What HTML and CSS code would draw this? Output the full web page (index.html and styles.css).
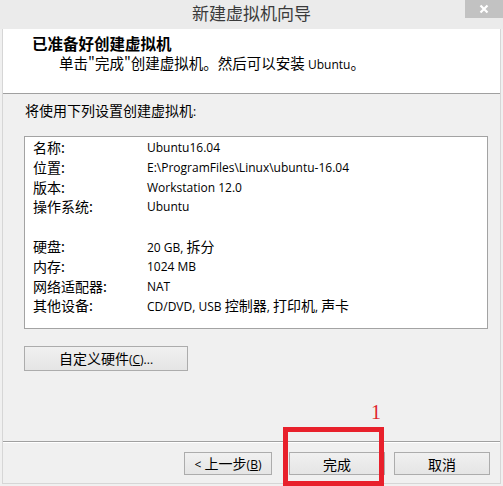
FILE: index.html
```html
<!DOCTYPE html>
<html lang="zh-CN">
<head>
<meta charset="utf-8">
<title>新建虚拟机向导</title>
<link rel="stylesheet" href="styles.css">
</head>
<body>
<div class="window">
  <div class="titlebar">
    <span class="spacer"></span>
    <div class="title">新建虚拟机向导</div>
    <div class="close">
      <svg width="10" height="10" viewBox="0 0 10 10"><path d="M1.5 1.5 L8.5 8.5 M8.5 1.5 L1.5 8.5" stroke="#fff" stroke-width="2.2" fill="none"/></svg>
    </div>
  </div>
  <div class="frame">
    <div class="header">
      <div class="heading">已准备好创建虚拟机</div>
      <div class="subtitle">单击"完成"创建虚拟机。然后可以安装 <span class="lat">Ubuntu</span>。</div>
    </div>
    <div class="main">
      <div class="intro">将使用下列设置创建虚拟机<span class="lat">:</span></div>
      <div class="summary">
        <div class="k">名称:</div><div class="v">Ubuntu16.04</div>
        <div class="k">位置:</div><div class="v">E:\ProgramFiles\Linux\ubuntu-16.04</div>
        <div class="k">版本:</div><div class="v">Workstation 12.0</div>
        <div class="k">操作系统:</div><div class="v">Ubuntu</div>
        <div class="k blank"></div><div class="v blank"></div>
        <div class="k">硬盘:</div><div class="v">20 GB, <span class="zh">拆分</span></div>
        <div class="k">内存:</div><div class="v">1024 MB</div>
        <div class="k">网络适配器:</div><div class="v">NAT</div>
        <div class="k">其他设备:</div><div class="v">CD/DVD, USB <span class="zh">控制器</span>, <span class="zh">打印机</span>, <span class="zh">声卡</span></div>
      </div>
      <button class="btn custom">自定义硬件<span class="lat">(<u>C</u>)...</span></button>
    </div>
    <div class="footer">
      <button class="btn back"><span class="lat">&lt;</span> 上一步<span class="lat">(<u>B</u>)</span></button>
      <button class="btn finish">完成</button>
      <button class="btn cancel">取消</button>
    </div>
  </div>
  <div class="annot-num">1</div>
  <div class="annot-box"></div>
</div>
</body>
</html>
```
FILE: styles.css
```css
* { box-sizing: border-box; }
html, body { margin: 0; padding: 0; }
body {
  width: 503px;
  height: 486px;
  overflow: hidden;
  background: #f0f0f0;
  font-family: "Open Sans", "Noto Sans CJK SC", sans-serif;
  color: #000;
}
.window {
  position: relative;
  width: 503px;
  height: 486px;
  display: flex;
  flex-direction: column;
  background: #f0f0f0;
}
.titlebar {
  height: 29px;
  flex: none;
  background: #ebebeb;
  display: grid;
  grid-template-columns: 1fr auto 1fr;
  align-items: start;
}
.title {
  font-family: "Noto Sans CJK SC", sans-serif;
  font-size: 17px;
  line-height: 26px;
  color: #3a3a3a;
}
.close {
  justify-self: end;
  width: 38px;
  height: 18px;
  background: #c2c2c2;
  display: flex;
  align-items: center;
  justify-content: center;
}
.frame {
  flex: 1;
  margin: 0 2px 2px 2px;
  border-left: 1px solid #d6d6d6;
  border-right: 1px solid #d6d6d6;
  border-bottom: 1px solid #d6d6d6;
  display: flex;
  flex-direction: column;
}
.header {
  height: 65px;
  background: #fff;
  border-bottom: 1px solid #a0a0a0;
  padding-top: 5px;
}
.heading {
  font-family: "Noto Sans CJK SC", sans-serif;
  font-weight: 700;
  font-size: 15.5px;
  line-height: 19px;
  padding-left: 29px;
}
.subtitle {
  font-family: "Noto Sans CJK SC", sans-serif;
  font-size: 14.5px;
  line-height: 20px;
  padding-left: 56px;
}
.lat { font-family: "Open Sans", sans-serif; font-size: 12px; }
.zh { font-family: "Noto Sans CJK SC", sans-serif; font-size: 14px; }
.main {
  padding: 6px 0 0 21px;
}
.intro {
  font-family: "Noto Sans CJK SC", sans-serif;
  font-size: 14px;
  line-height: 20px;
  padding-left: 1px;
}
.summary {
  margin-top: 14px;
  width: 464px;
  height: 193px;
  background: #fff;
  border: 1px solid #a3a3a3;
  padding: 1px 0 0 8px;
  display: grid;
  grid-template-columns: 114px 1fr;
  grid-auto-rows: 19.8px;
  align-content: start;
}
.k {
  font-family: "Noto Sans CJK SC", sans-serif;
  font-size: 14px;
  line-height: 19.8px;
}
.v {
  font-size: 12px;
  line-height: 19.8px;
  white-space: nowrap;
}
.btn {
  margin: 0;
  padding: 0;
  border: 1px solid #acacac;
  background: linear-gradient(#f0f0f0, #e5e5e5);
  font-family: "Noto Sans CJK SC", sans-serif;
  font-size: 14px;
  color: #000;
  line-height: 20px;
}
.custom {
  display: block;
  margin-top: 17px;
  width: 164px;
  height: 25px;
}
.footer {
  margin-top: auto;
  height: 42px;
  border-top: 1px solid #a0a0a0;
  box-shadow: inset 0 1px 0 #fff;
  padding: 10px 10px 0 0;
  display: flex;
  justify-content: flex-end;
  align-items: flex-start;
}
.footer .btn { height: 23px; }
.back { width: 88px; margin-right: 17px; }
.finish { width: 96px; margin-right: 9px; }
.cancel { width: 96px; }
.annot-num {
  position: absolute;
  left: 371px;
  top: 400px;
  font-family: "Liberation Serif", serif;
  font-size: 20px;
  line-height: 24px;
  color: #e0262c;
}
.annot-box {
  position: absolute;
  left: 283px;
  top: 427px;
  width: 101px;
  height: 59px;
  border: 5px solid #e8202b;
}
```
